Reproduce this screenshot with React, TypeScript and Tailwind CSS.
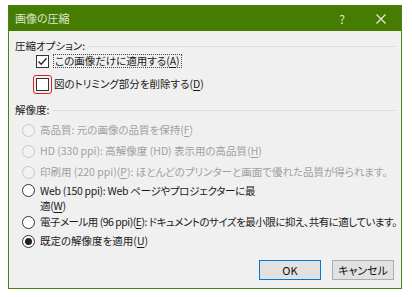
import React from 'react';

const font = { fontFamily: '"Noto Sans CJK JP", "Noto Sans", sans-serif' };

function U({ k }: { k: string }) {
  return (
    <>
      (<span className="underline underline-offset-[2px]">{k}</span>)
    </>
  );
}

function CheckBox({ checked }: { checked?: boolean }) {
  return (
    <span className="flex h-[13px] w-[13px] shrink-0 items-center justify-center border border-[#333333] bg-white">
      {checked && (
        <svg width="11" height="11" viewBox="0 0 11 11">
          <path d="M1.5 5.5 L4.2 8.3 L9.5 2.2" fill="none" stroke="#222" strokeWidth="1.3" />
        </svg>
      )}
    </span>
  );
}

function Radio({ disabled, selected }: { disabled?: boolean; selected?: boolean }) {
  return (
    <span
      className={`flex h-[13px] w-[13px] shrink-0 items-center justify-center rounded-full border ${
        disabled ? 'border-[#c6c6c6] bg-[#f2f2f2]' : 'border-[#333333] bg-white'
      }`}
    >
      {selected && <span className="h-[7px] w-[7px] rounded-full bg-[#222]" />}
    </span>
  );
}

export default function App() {
  const radios = [
    { label: <>高品質: 元の画像の品質を保持<U k="F" /></> },
    { label: <>HD (330 ppi): 高解像度 (HD) 表示用の高品質<U k="H" /></> },
    { label: <>印刷用 (220 ppi)<U k="P" />: ほとんどのプリンターと画面で優れた品質が得られます。</> },
  ];

  return (
    <div
      className="h-[297px] w-[412px] bg-white pl-[8px] pt-[5px] text-[10.5px] leading-none [font-feature-settings:'palt']"
      style={font}
    >
      <div className="flex h-[284px] w-[394px] flex-col border border-[#4b8410] bg-[#f0f0f0]">
        {/* title bar */}
        <div className="flex h-[25px] shrink-0 items-center bg-[#467c02] pl-[6px] text-[#dfe9d2]">
          <span className="text-[11px]">画像の圧縮</span>
          <span className="ml-auto mr-[31px] text-[12px]">?</span>
          <svg className="mr-[15px]" width="10" height="10" viewBox="0 0 10 10">
            <path d="M0.5 0.5 L9.5 9.5 M9.5 0.5 L0.5 9.5" stroke="#e6eede" strokeWidth="1.2" />
          </svg>
        </div>

        <div className="flex flex-1 flex-col pl-[6px] pr-[6px] text-[#1a1a1a]">
          {/* compression options */}
          <div className="mt-[8px] flex h-[14px] items-center gap-[4px]">
            <span>圧縮オプション:</span>
            <span className="flex-1 border-t border-dotted border-[#cfcfcf]" />
          </div>
          <div className="flex h-[16px] items-center pl-[21px]">
            <CheckBox checked />
            <span className="ml-[4px] border border-dotted border-[#444] px-[1px] py-[1px]">
              この画像だけに適用する<U k="A" />
            </span>
          </div>
          <div className="mt-[7px] flex h-[16px] items-center pl-[21px]">
            <span className="relative flex">
              <CheckBox />
              <span className="absolute -inset-[3px] rounded-[3px] border border-[#e02020]" />
            </span>
            <span className="ml-[5px]">
              図のトリミング部分を削除する<U k="D" />
            </span>
          </div>

          {/* resolution */}
          <div className="mt-[11px] flex h-[14px] items-center gap-[4px]">
            <span>解像度:</span>
            <span className="flex-1 border-t border-dotted border-[#cfcfcf]" />
          </div>
          <div className="mt-[3px] flex flex-col pl-[7px]">
            {radios.map((r, i) => (
              <div key={i} className="flex h-[21px] items-center gap-[5px] text-[#a0a0a0]">
                <Radio disabled />
                <span className="whitespace-nowrap">{r.label}</span>
              </div>
            ))}
            <div className="flex items-start gap-[5px]">
              <span className="mt-[1px]">
                <Radio />
              </span>
              <span className="leading-[15px] tracking-[-0.3px]">
                Web (150 ppi): Web ページやプロジェクターに最
                <br />
                適<U k="W" />
              </span>
            </div>
            <div className="flex h-[19px] items-center gap-[5px]">
              <Radio />
              <span className="whitespace-nowrap tracking-[-0.5px]">
                電子メール用 (96 ppi)<U k="E" />: ドキュメントのサイズを最小限に抑え、共有に適しています。
              </span>
            </div>
            <div className="flex h-[19px] items-center gap-[5px]">
              <Radio selected />
              <span>
                既定の解像度を適用<U k="U" />
              </span>
            </div>
          </div>

          {/* buttons */}
          <div className="mt-auto mb-[8px] flex justify-end gap-[11px] pr-[1px]">
            <button className="flex h-[20px] w-[62px] items-center justify-center border border-[#0078d7] bg-[#e1e1e1] text-[11px] text-[#111]">
              OK
            </button>
            <button className="flex h-[20px] w-[62px] items-center justify-center border border-[#adadad] bg-[#e1e1e1] text-[11px] text-[#111]">
              キャンセル
            </button>
          </div>
        </div>
      </div>
    </div>
  );
}
